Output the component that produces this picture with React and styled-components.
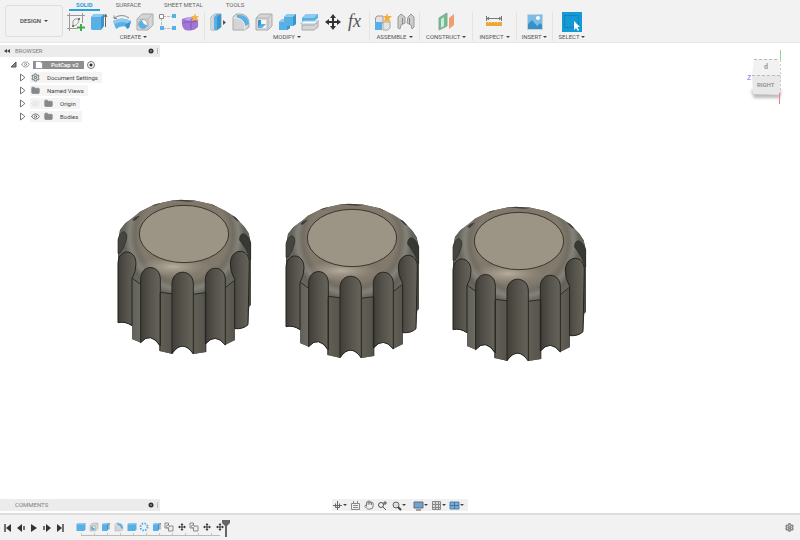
import React from 'react';
import styled, { createGlobalStyle } from 'styled-components';
import { Eye, Folder, Hand, Settings } from 'lucide-react';

const GlobalStyle = createGlobalStyle`
  * {
    box-sizing: border-box;
  }

  body {
    margin: 0;
    background: #fff;
    color: #4a4a4a;
    font-family: Roboto, 'Liberation Sans', sans-serif;
    font-size: 6px;
    line-height: 8px;
  }

  button {
    margin: 0;
    padding: 0;
    border: 0;
    background: none;
    color: inherit;
    font: inherit;
  }

  svg {
    display: block;
  }
`;

const StyledApp = styled.div`
  display: flex;
  flex-direction: column;
  height: 100vh;
`;

const StyledHeader = styled.header`
  display: flex;
  flex: none;
  height: 43px;
  background: #f2f2f2;
  border-bottom: 1px solid #e6e6e6;
`;

const StyledWorkspace = styled.button`
  display: flex;
  align-items: center;
  justify-content: center;
  gap: 3px;
  width: 58px;
  height: 32px;
  margin: 5px 0 0 5px;
  border: 1px solid #dedede;
  border-radius: 3px;
  color: #444;
  font-weight: 500;
`;

const StyledTools = styled.div`
  flex: 1;
`;

const StyledTabs = styled.nav`
  display: flex;
  gap: 9px;
  height: 12px;
  padding-left: 6px;
`;

const StyledTab = styled.button`
  height: 11px;
  padding: 0 7px;
  border-bottom: 2px solid ${(props) => (props.$active ? '#2a9fd8' : 'transparent')};
  color: ${(props) => (props.$active ? '#2a9fd8' : '#666')};
  font-weight: ${(props) => (props.$active ? 700 : 400)};
`;

const StyledGroups = styled.div`
  display: flex;
`;

const StyledGroup = styled.div`
  display: flex;
  flex-direction: column;
  align-items: center;
  height: 29px;
  padding: 0 ${(props) => props.$pad}px;
  border-right: 1px solid ${(props) => (props.$last ? 'transparent' : '#e4e4e4')};
`;

const StyledIcons = styled.div`
  display: flex;
  gap: 3px;
`;

const StyledGroupLabel = styled.button`
  display: flex;
  align-items: center;
  gap: 2px;
  height: 9px;
  color: #555;
`;

const StyledCaret = styled.span`
  border: 2px solid transparent;
  border-top-color: #444;
  border-bottom: 0;
`;

const StyledViewport = styled.main`
  position: relative;
  display: flex;
  flex: 1;
  flex-direction: column;
  justify-content: space-between;
  min-height: 0;
  padding: 2px 0;
`;

const StyledScene = styled.svg`
  position: absolute;
  inset: 0;
  width: 100%;
  height: 100%;
`;

const StyledOverlayTop = styled.div`
  position: relative;
  display: flex;
  justify-content: space-between;
`;

const StyledOverlayBottom = styled.div`
  position: relative;
  display: grid;
  grid-template-columns: 1fr auto 1fr;
`;

const StyledPanel = styled.section`
  width: 160px;
`;

const StyledPanelHeader = styled.div`
  display: flex;
  align-items: center;
  height: 12px;
  padding: 0 0 0 ${(props) => props.$indent}px;
  background: #ececec;
  color: #808080;
`;

const StyledPanelTitle = styled.span`
  flex: 1;
`;

const StyledTree = styled.ul`
  margin: 2px 0 0;
  padding: 0;
  list-style: none;
`;

const StyledTreeRow = styled.li`
  display: flex;
  align-items: center;
  gap: 3px;
  height: 11px;
  margin-bottom: 2px;
  padding-left: ${(props) => (props.$root ? 9 : 18)}px;
  color: #444;
`;

const StyledTreeItem = styled.div`
  display: flex;
  align-items: center;
  gap: 4px;
  height: 11px;
  padding: 0 4px 0 1px;
  background: #f4f4f4;
`;

const StyledTreeText = styled.span`
  padding-left: 3px;
`;

const StyledDocument = styled.div`
  display: flex;
  align-items: center;
  gap: 4px;
  height: 8px;
  padding: 0 5px 0 1px;
  background: #8e8e8e;
  color: #fff;
  font-weight: 500;
`;

const StyledRadio = styled.input`
  width: 8px;
  height: 8px;
  margin: 0;
  appearance: none;
  border: 1px solid #777;
  border-radius: 50%;
  background: radial-gradient(#333 0 1px, #fff 2px);
`;

const StyledNavBar = styled.div`
  display: flex;
  align-items: center;
  gap: 3px;
  height: 12px;
  padding: 0 4px 0 0;
  background: #f0f0f0;
`;

const StyledNavButton = styled.button`
  display: flex;
  align-items: center;
  padding-left: ${(props) => (props.$split ? 4 : 0)}px;
`;

const StyledTimeline = styled.footer`
  display: flex;
  flex: none;
  align-items: center;
  height: 27px;
  padding: 0 6px 0 2px;
  border-top: 2px solid #dcdcdc;
  background: #f2f2f2;
`;

const StyledPlayback = styled.div`
  display: flex;
  gap: 1px;
  width: 73px;
`;

const StyledHistory = styled.div`
  padding-top: 3px;
`;

const StyledFeatures = styled.div`
  display: flex;
  width: 151px;
`;

const StyledFeature = styled.button`
  display: flex;
  flex: 1;
  flex-direction: column;
  align-items: center;
`;

const StyledTrack = styled.div`
  height: 3px;
  margin: 1px 6px 0;
  border-bottom: 1px solid #bbb;
  background: repeating-linear-gradient(90deg, #c5c5c5 0 1px, transparent 1px 13px);
`;

const StyledMarker = styled.svg`
  width: 8px;
  height: 18px;
  margin-left: -4px;
`;

const StyledSpacer = styled.div`
  flex: 1;
`;

const B = '#58b0e6';
const BD = '#3a94cd';
const BL = '#8fcaee';
const G = '#8c8c8c';
const GL = '#d5d5d5';

const glyphs = {
  sketch: (
    <>
      <path
        d="M3 3.500H17M3 16.500H11M3.500 3V17M16.500 3V11M1 3.500H3M3.500 1V3M17 3.500H19M16.500 1V3M3.500 17V19M1 16.500H3"
        stroke="#999"
        fill="none"
      />
      <path d="M7 14V9L9 7H13Q13 12 8 14Z" stroke="#999" fill="none" />
      <path d="M12 6H14V8H12ZM6 13H8V15H6Z" fill="#777" />
      <path d="M15 12V19M11 15.500H19" stroke="#43ab4e" strokeWidth="2" />
    </>
  ),
  extrude: (
    <>
      <path d="M2 5L5 2H15L12 5V18H3L2 17Z" fill={B} />
      <path d="M2 5L5 2H15L12 5Z" fill={BL} />
      <path d="M12 5L15 2V14L12 18Z" fill={BD} />
      <path d="M16.500 15V3M15 5L16.500 2L18 5" stroke="#666" fill="none" />
    </>
  ),
  revolve: (
    <>
      <path d="M1 9Q10 4 19 9L17 16Q10 12 4 17Z" fill={B} />
      <path d="M1 9Q10 4 19 9L17 12Q10 8 3 12Z" fill={BL} />
      <path d="M2 6Q10 1 17 6M2 3.500V6.500H5" stroke="#888" fill="none" />
      <path d="M13 13L19 9L17 16L15 17Z" fill={BD} />
    </>
  ),
  hole: (
    <>
      <path d="M2 7L7 2H18V13L13 18H2Z" fill={GL} stroke="#aaa" />
      <path d="M2 7H13V18M13 7L18 2" stroke="#bbb" fill="none" />
      <circle cx="8" cy="12" r="4.5" fill="#f5f5f5" stroke="#aaa" />
      <path d="M4 12A4 4 0 0 0 12 13Q8 13 7 8Q4 9 4 12" fill={B} />
    </>
  ),
  pattern: (
    <>
      <path d="M5 4.500H15M3.500 6V15M5 16.500H15" stroke="#bbb" strokeDasharray="3 1" />
      <path d="M14 2H18V6H14ZM2 14H6V18H2ZM14 14H18V18H14Z" fill={B} />
      <path d="M1.500 2.500H5.500V6.500H1.500Z" fill="#fff" stroke="#888" />
    </>
  ),
  form: (
    <>
      <path d="M1 7Q7 4 14 6Q18 8 17 15Q12 20 4 18Q0 15 1 7" fill="#a077d3" />
      <path d="M2 11Q5 9 10 10L17 9M10 10V18" stroke="#8459bd" fill="none" />
      <path d="M3 7Q7 4 11 6L8 9Z" fill="#c2a0e6" />
      <path d="M14 1L15 4L18 4L16 6L18 9L14 8L11 9L12 6L10 4L13 4Z" fill="#f6b53c" />
    </>
  ),
  press: (
    <>
      <path d="M3 5L7 2H13V15L9 18H3Z" fill={B} stroke="#8ab" strokeWidth="1" />
      <path d="M3 5L7 2H9L6 5V18H3Z" fill={GL} />
      <path d="M9 5L13 2V15L9 18Z" fill={BD} />
      <path d="M15 8L18 10.500L15 13Z" fill="#555" />
    </>
  ),
  fillet: (
    <>
      <path d="M2 5L5 2H10Q18 3 18 12V15L14 18H2Z" fill={GL} stroke="#aaa" />
      <path d="M6 3H10Q17 4 18 12L14 14Q13 7 6 6Z" fill={B} />
      <path d="M2 6H6Q13 7 14 15V18" stroke="#eee" fill="none" />
    </>
  ),
  shell: (
    <>
      <path d="M2 6L6 2H18V14L14 18H2Z" fill={GL} stroke="#aaa" />
      <path d="M2 6H14V18M14 6L18 2" stroke="#b5b5b5" fill="none" />
      <path d="M4 8H12V16H4Z" fill="#f5f5f5" />
      <path d="M4 8H7V12H12L8 16H4Z" fill={B} />
      <path d="M4 8H7V12L4 15Z" fill={BD} />
    </>
  ),
  combine: (
    <>
      <path d="M7 5L10 2H19V12L16 14H13V16L10 18H2V10L5 7H7Z" fill={B} />
      <path d="M7 5L10 2H19L16 5ZM2 10L5 7H7V10Z" fill={BL} />
      <path d="M16 5L19 2V12L16 14ZM10 14H13V16L10 18Z" fill={BD} />
    </>
  ),
  split: (
    <>
      <path d="M2 6L6 2H18V6L14 9H2Z" fill={B} />
      <path d="M2 6L6 2H18L14 6Z" fill={BL} />
      <path d="M1 11L4 9H19L15 12H1Z" fill="#fff" stroke="#9bc6de" />
      <path d="M2 13H14L18 10V15L14 18H2Z" fill={GL} stroke="#aaa" />
    </>
  ),
  component: (
    <>
      <path d="M2.500 6L4 4H10V11H2.500Z" fill="#e2e2e2" stroke="#999" />
      <path d="M2 10H9V18H2Z" fill={B} />
      <path d="M10 10H17V16L15 18H10Z" fill="#e4e4e4" stroke="#aaa" />
      <path d="M14 1L15 4L19 4L16 7L18 10L14 9L11 10L12 6L10 4L13 4Z" fill="#f3ae3b" />
    </>
  ),
  joint: (
    <>
      <path d="M2 5L5 2L9 5V11L5 13L4 17L2 16Z" fill="#ccc" stroke="#999" />
      <path d="M12 5L15 2L18 5V15L16 17L15 13L11 11Z" fill="#ccc" stroke="#999" />
      <path d="M6.500 6V12M13.500 6V12" stroke="#888" fill="none" />
    </>
  ),
  plane: (
    <>
      <path d="M3 6L11 1V14L3 18Z" fill="#6cbd8f" stroke="#8aa896" />
      <path d="M5 7L8 5V14L5 16Z" fill="#cfe9da" />
      <path d="M13 6L18 2V13L13 17Z" fill="#ee9d74" />
    </>
  ),
  measure: (
    <>
      <path d="M2.500 4V9M17.500 4V9M3 6.500H17M5 5L3 6.500L5 8M15 5L17 6.500L15 8" stroke="#777" fill="none" />
      <path d="M2 10H18V14H2Z" fill="#eaa83a" />
      <path d="M4.500 10V11M7.500 10V11M10.500 10V11M13.500 10V11" stroke="#fbd58f" />
    </>
  ),
  image: (
    <>
      <path d="M2.500 2.500H17.500V17.500H2.500Z" fill="#79bde8" stroke="#c5d3dc" />
      <path d="M3 12L7 8L12 14L15 11L17 13V17H3Z" fill="#3a90c5" />
      <circle cx="13" cy="6" r="2" fill="#fff" />
    </>
  ),
  select: (
    <>
      <path d="M0 0H20V20H0Z" fill="#169ad5" />
      <path d="M2.500 3.500H16.500V15.500H2.500Z" fill="none" stroke="#0b7db5" strokeDasharray="2 1" />
      <path d="M12 9V18L14 16L16 19L17 18L15.500 15H18Z" fill="#fff" />
    </>
  ),
  box: (
    <>
      <path d="M1 5L4 2H19V15L16 18H1Z" fill={B} />
      <path d="M1 5L4 2H19L16 5Z" fill={BL} />
    </>
  ),
  circular: <circle cx="10" cy="10" r="7" stroke={B} strokeWidth="4" strokeDasharray="3 2.500" fill="none" />,
  copy: (
    <g stroke={G} strokeWidth="2" fill="#eee">
      <path d="M2 2H9V12H2Z" />
      <circle cx="8" cy="9" r="3" />
      <path d="M9 11L12 8H18V18H9Z" />
    </g>
  ),
  move: (
    <path
      d="M10 2L13 6H11V9H14V7L18 10L14 13V11H11V14H13L10 18L7 14H9V11H6V13L2 10L6 7V9H9V6H7Z"
      fill="#333"
    />
  ),
  fx: (
    <text x="2" y="15" fill="#555" fontFamily="Liberation Serif, serif" fontStyle="italic" fontSize="18">
      fx
    </text>
  ),
};

const Glyph = ({ name, size = 20 }) => (
  <svg width={size} height={size} viewBox="0 0 20 20">
    {glyphs[name]}
  </svg>
);

const tabs = ['SOLID', 'SURFACE', 'SHEET METAL', 'TOOLS'];

const groups = [
  { label: 'CREATE', pad: 3, icons: ['sketch', 'extrude', 'revolve', 'hole', 'pattern', 'form'] },
  { label: 'MODIFY', pad: 3, icons: ['press', 'fillet', 'shell', 'combine', 'split', 'move', 'fx'] },
  { label: 'ASSEMBLE', pad: 3, icons: ['component', 'joint'] },
  { label: 'CONSTRUCT', pad: 6, icons: ['plane'] },
  { label: 'INSPECT', pad: 6, icons: ['measure'] },
  { label: 'INSERT', pad: 5, icons: ['image'] },
  { label: 'SELECT', pad: 5, icons: ['select'] },
];

const treeRows = [
  { text: 'Document Settings', gear: true },
  { text: 'Named Views' },
  { text: 'Origin', eye: 'off' },
  { text: 'Bodies', eye: 'on' },
];

const Expander = () => (
  <svg width="9" height="9" viewBox="0 0 9 9">
    <path d="M2.500 1V8L6.500 5V4Z" fill="#fff" stroke="#777" />
  </svg>
);

const PanelControls = () => (
  <svg width="12" height="8" viewBox="0 0 12 8">
    <circle cx="3" cy="4" r="2.5" fill="#333" />
    <path d="M2 4H4" stroke="#aaa" />
    <path d="M9.500 1V7" stroke="#bbb" />
  </svg>
);

// outline of each flute, from left to right round the front of the cap
const flutes = [
  'M24 398V222C24 174 78 174 78 222Q78 245 66 266V407Q45 393 24 398Z',
  'M92 458V268C92 221 151 221 151 268V467Q121 424 92 458Z',
  'M186 491V282C186 235 250 235 250 282V492Q218 446 186 491Z',
  'M286 462V270C286 223 346 223 346 270V465Q316 427 286 462Z',
  'M374 416V268Q361 245 361 222C361 172 418 172 418 218L414 404Q400 418 374 416Z',
];

const Knob = ({ x, y }) => (
  <g transform={`translate(${x} ${y}) scale(0.3333)`} strokeLinejoin="round">
    <path
      d="M24 160L30 120L46 100L75 78L90 65L135 43L190 31L250 31L305 43L345 62L374 80L403 110L416 130L423 160V345L418 350L414 404Q400 418 375 416V450L345 465Q316 427 288 462V486L250 492Q218 446 186 491L148 483V467Q121 424 92 458L66 447V407Q45 393 24 398Z"
      fill="#4b4942"
    />
    <path d="M66 260L93 278V458L66 447Z" fill="url(#ribLeft)" />
    <path d="M150 305H187V492L150 483Z" fill="url(#rib)" />
    <path d="M249 305H288V486L249 492Z" fill="url(#rib)" />
    <path d="M345 285L375 265V450L345 465Z" fill="url(#rib)" />
    <path
      d="M24 190V160L30 120L46 100L75 78L90 65L135 43L190 31L250 31L305 43L345 62L374 80L403 110L416 130L421 160V200L373 272L345 294L288 308L250 313L186 311L148 308L92 283L66 264Z"
      fill="url(#crown)"
    />
    <ellipse cx="190" cy="230" rx="110" ry="32" fill="url(#shine)" />
    <path d="M66 264L92 283M148 307L186 311M250 313L288 308M346 293L373 271" stroke="#2c2a24" strokeWidth="3" />
    <path
      d="M24 190L24 150Q28 128 42 125Q54 130 49 150Q44 172 30 190Z"
      fill="#46463f"
      stroke="#2b2b26"
      strokeWidth="2"
    />
    <path
      d="M389 150Q388 134 400 131Q415 136 422 158V210Q412 178 389 150Z"
      fill="#393934"
      stroke="#252520"
      strokeWidth="2"
    />
    <path
      d="M66 91Q75 78 90 77L75 92ZM366 78Q375 76 389 96L380 92ZM190 31Q220 26 253 34L235 35ZM125 48L150 40L140 46ZM300 41L325 52L310 47Z"
      fill="#3e3f3a"
    />
    {flutes.map((d) => (
      <path key={d} d={d} fill="url(#flute)" stroke="#24231f" strokeWidth="3" />
    ))}
    <path d="M150 309V483M288 309V486" stroke="#24231f" strokeWidth="2" />
    <ellipse cx="222" cy="132" rx="134" ry="86" fill="#9c9484" stroke="#3a362d" strokeWidth="3" />
  </g>
);

const Scene = () => (
  <StyledScene viewBox="0 43 800 470" role="img" aria-label="PotCap bodies">
    <defs>
      <linearGradient id="flute">
        <stop offset="0" stopColor="#403e38" />
        <stop offset="0.5" stopColor="#55534b" />
        <stop offset="1" stopColor="#67645b" />
      </linearGradient>
      <linearGradient id="rib">
        <stop offset="0" stopColor="#625f56" />
        <stop offset="1" stopColor="#55534b" />
      </linearGradient>
      <linearGradient id="ribLeft">
        <stop offset="0" stopColor="#5f6059" />
        <stop offset="1" stopColor="#6d6c63" />
      </linearGradient>
      <radialGradient id="crown" gradientUnits="userSpaceOnUse" cx="222" cy="135" r="200">
        <stop offset="0.45" stopColor="#7f776a" />
        <stop offset="0.65" stopColor="#827a6d" />
        <stop offset="0.74" stopColor="#736d62" />
        <stop offset="0.82" stopColor="#83827a" />
        <stop offset="0.91" stopColor="#62625b" />
        <stop offset="1" stopColor="#66665f" />
      </radialGradient>
      <radialGradient id="shine">
        <stop offset="0" stopColor="#c0b7a7" stopOpacity="0.85" />
        <stop offset="1" stopColor="#a49b8c" stopOpacity="0" />
      </radialGradient>
    </defs>
    <Knob x={110} y={190} />
    <Knob x={278} y={194} />
    <Knob x={445} y={197} />
  </StyledScene>
);

const ViewCube = () => (
  <svg width="60" height="66" viewBox="740 45 60 66">
    <defs>
      <filter id="cubeShadow" x="-20%" y="-50%" width="140%" height="200%">
        <feGaussianBlur stdDeviation="1.5" />
      </filter>
    </defs>
    <path d="M751 90H781L780 98H754Z" fill="#bbb" filter="url(#cubeShadow)" />
    <path d="M754 59H779L781 75H752Z" fill="#f2f2f2" />
    <path d="M752 75H781L780 95L753 94Z" fill="#e8e8e8" />
    <path d="M754 59.500H779M752 75.500H781" stroke="#bbb" strokeDasharray="3 2" />
    <path d="M780.500 60V94" stroke="#ccc" strokeDasharray="2 2" />
    <path d="M780.500 50V60" stroke="#85d795" />
    <path d="M779.500 93V104" stroke="#ee7f7f" />
    <text x="747" y="80" fill="#7474e3" fontSize="7">Z</text>
    <text x="757" y="87" fill="#888" fontSize="6" fontWeight="500">RIGHT</text>
    <text x="764" y="69" fill="#999" fontSize="7" fontWeight="700">d</text>
  </svg>
);

const Browser = () => (
  <StyledPanel>
    <StyledPanelHeader $indent={4}>
      <svg width="11" height="6" viewBox="0 0 11 6">
        <path d="M3 1V5L0 3ZM6 1V5L3 3Z" fill="#444" />
      </svg>
      <StyledPanelTitle>BROWSER</StyledPanelTitle>
      <PanelControls />
    </StyledPanelHeader>
    <StyledTree>
      <StyledTreeRow $root>
        <svg width="9" height="9" viewBox="0 0 9 9">
          <path d="M7 2V7H2Z" fill="#888" stroke="#555" />
        </svg>
        <Eye size={9} color="#888" />
        <StyledDocument>
          <svg width="10" height="8" viewBox="0 0 10 8">
            <path d="M1.500 0.500H6.500L8.500 2.500V7.500H1.500Z" fill="#fff" stroke="#99a" />
          </svg>
          <StyledTreeText>PotCap v2</StyledTreeText>
        </StyledDocument>
        <StyledRadio type="radio" name="component" aria-label="Activate PotCap v2" defaultChecked />
      </StyledTreeRow>
      {treeRows.map((row) => (
        <StyledTreeRow key={row.text}>
          <Expander />
          <StyledTreeItem>
            {row.eye && <Eye size={9} color={row.eye === 'on' ? '#555' : '#ddd'} />}
            {row.gear ? (
              <Settings size={9} color="#888" strokeWidth={3} />
            ) : (
              <Folder size={9} color="#888" fill="#888" />
            )}
            <StyledTreeText>{row.text}</StyledTreeText>
          </StyledTreeItem>
        </StyledTreeRow>
      ))}
    </StyledTree>
  </StyledPanel>
);

const navIcons = {
  orbit: <path d="M5.500 1V10M1 5.500H10M3.500 3.500V7.500H7.500V3.500" stroke="#666" fill="none" />,
  look: <path d="M1.500 3.500H9.500V9.500H1.500ZM3.500 1V3M7.500 1V3M3 5.500H8M3 7.500H8" stroke="#888" fill="none" />,
  zoom: (
    <>
      <circle cx="4" cy="5" r="2.5" stroke="#555" fill="none" />
      <path d="M6 7L9 10M8 1V5M6 3H10" stroke="#555" />
    </>
  ),
  fit: (
    <>
      <circle cx="5" cy="5" r="3" stroke="#666" fill="#ddd" />
      <path d="M7 7L10 10" stroke="#444" strokeWidth="2" />
    </>
  ),
  display: (
    <>
      <path d="M1 2H10V8H1Z" fill="#6ba6d3" stroke="#667" />
      <path d="M3 10H8" stroke="#555" />
    </>
  ),
  grid: <path d="M1.500 1.500H9.500V9.500H1.500ZM4.500 1V10M7.500 1V10M1 4.500H10M1 7.500H10" stroke="#888" fill="#ddd" />,
  views: (
    <>
      <path d="M1 2H10V9H1Z" fill="#6faee0" stroke="#5d7f9c" />
      <path d="M5.500 2V9M1 5.500H10" stroke="#47749a" />
    </>
  ),
};

const navItems = [
  { name: 'orbit', menu: true },
  { name: 'look' },
  { name: 'pan' },
  { name: 'zoom' },
  { name: 'fit', menu: true },
  { name: 'display', menu: true, split: true },
  { name: 'grid', menu: true },
  { name: 'views', menu: true },
];

const NavBar = () => (
  <StyledNavBar>
    {navItems.map(({ name, menu, split }) => (
      <StyledNavButton key={name} aria-label={name} $split={split}>
        {name === 'pan' ? (
          <Hand size={10} color="#666" />
        ) : (
          <svg width="11" height="11" viewBox="0 0 11 11">
            {navIcons[name]}
          </svg>
        )}
        {menu && <StyledCaret />}
      </StyledNavButton>
    ))}
  </StyledNavBar>
);

const playback = [
  { name: 'start', shape: 'M9 2V10L4 6Z', bar: 'M3 2V10' },
  { name: 'back', shape: 'M7 2V10L2 6Z', bar: 'M9 4V8' },
  { name: 'play', shape: 'M3 2V10L9 6Z' },
  { name: 'forward', shape: 'M5 2V10L10 6Z', bar: 'M3 4V8' },
  { name: 'end', shape: 'M3 2V10L8 6Z', bar: 'M9 2V10' },
];

const features = [
  'box',
  'hole',
  'extrude',
  'fillet',
  'box',
  'circular',
  'extrude',
  'copy',
  'move',
  'copy',
  'move',
  'move',
];

const Timeline = () => (
  <StyledTimeline>
    <StyledPlayback>
      {playback.map(({ name, shape, bar }) => (
        <button key={name} aria-label={name}>
          <svg width="12" height="12" viewBox="0 0 12 12">
            <path d={shape} fill="#333" />
            {bar && <path d={bar} stroke="#444" strokeWidth="1.500" />}
          </svg>
        </button>
      ))}
    </StyledPlayback>
    <StyledHistory>
      <StyledFeatures>
        {features.map((name, index) => (
          <StyledFeature key={`${name}-${index + 1}`} aria-label={name}>
            <Glyph name={name} size={10} />
          </StyledFeature>
        ))}
      </StyledFeatures>
      <StyledTrack />
    </StyledHistory>
    <StyledMarker viewBox="0 0 8 18">
      <path d="M0 1H8V4L5 7V18H3V7L0 4Z" fill="#666" />
    </StyledMarker>
    <StyledSpacer />
    <button aria-label="Timeline settings">
      <Settings size={9} color="#888" strokeWidth={4} />
    </button>
  </StyledTimeline>
);

const App = () => (
  <StyledApp>
    <GlobalStyle />
    <StyledHeader>
      <StyledWorkspace>
        DESIGN
        <StyledCaret />
      </StyledWorkspace>
      <StyledTools>
        <StyledTabs>
          {tabs.map((tab, index) => (
            <StyledTab key={tab} $active={index === 0}>
              {tab}
            </StyledTab>
          ))}
        </StyledTabs>
        <StyledGroups>
          {groups.map(({ label, pad, icons }, index) => (
            <StyledGroup key={label} $pad={pad} $last={index === groups.length - 1}>
              <StyledIcons>
                {icons.map((name) => (
                  <button key={name} aria-label={name}>
                    <Glyph name={name} />
                  </button>
                ))}
              </StyledIcons>
              <StyledGroupLabel>
                {label}
                <StyledCaret />
              </StyledGroupLabel>
            </StyledGroup>
          ))}
        </StyledGroups>
      </StyledTools>
    </StyledHeader>
    <StyledViewport>
      <Scene />
      <StyledOverlayTop>
        <Browser />
        <ViewCube />
      </StyledOverlayTop>
      <StyledOverlayBottom>
        <StyledPanel>
          <StyledPanelHeader $indent={15}>
            <StyledPanelTitle>COMMENTS</StyledPanelTitle>
            <PanelControls />
          </StyledPanelHeader>
        </StyledPanel>
        <NavBar />
      </StyledOverlayBottom>
    </StyledViewport>
    <Timeline />
  </StyledApp>
);

export default App;
